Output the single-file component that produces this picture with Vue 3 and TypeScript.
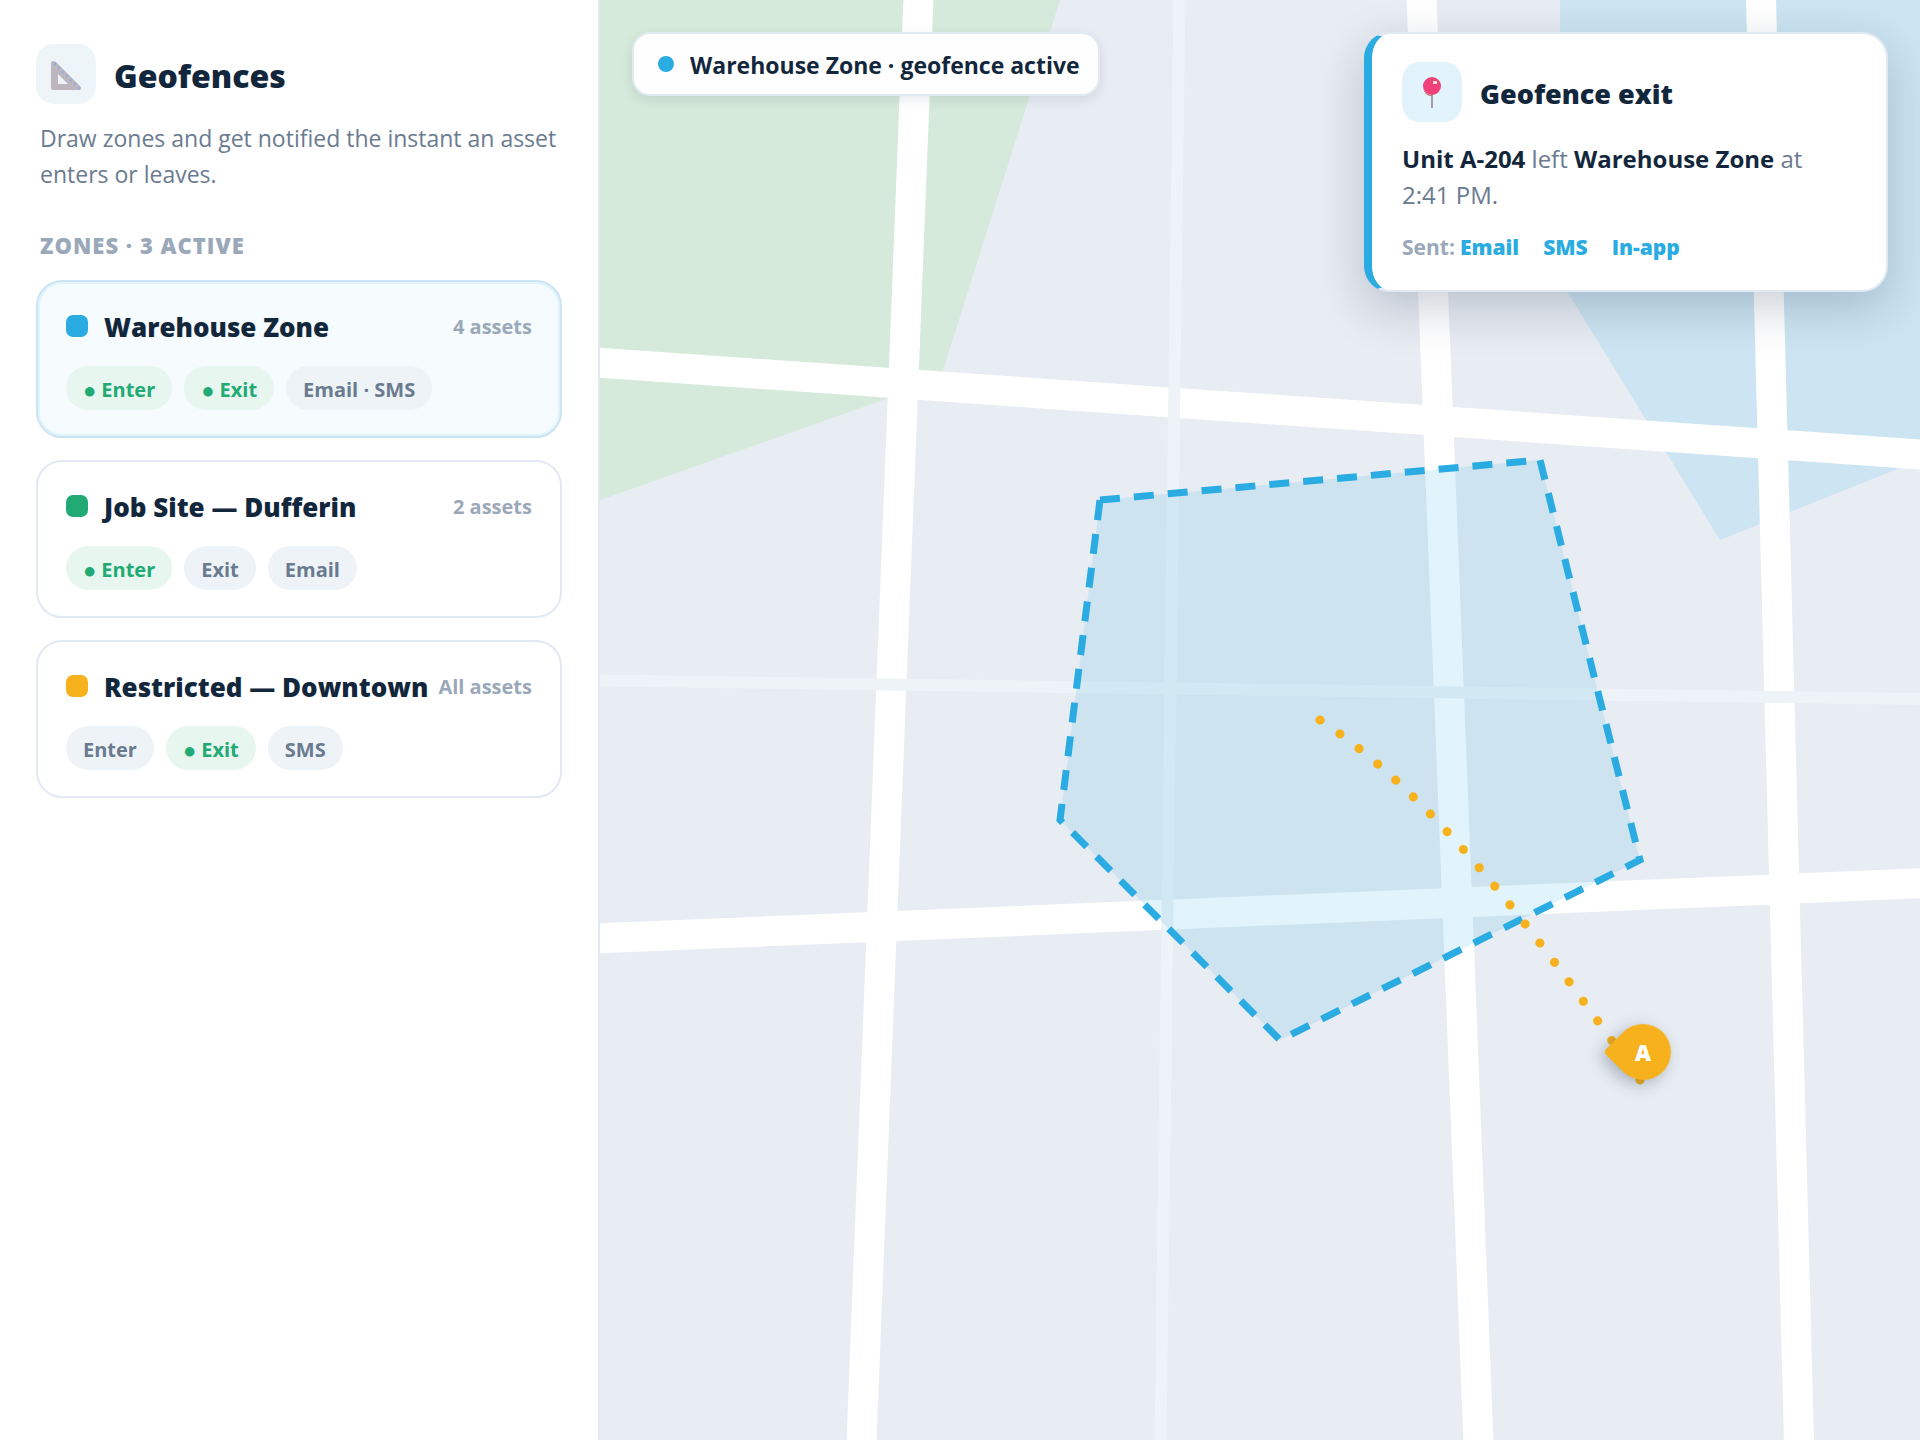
<script setup lang="ts">
import { ref } from 'vue'

interface Rule {
  label: string
  on: boolean
}

interface Zone {
  name: string
  assets: string
  color: string
  rules: Rule[]
}

const zones: Zone[] = [
  {
    name: 'Warehouse Zone',
    assets: '4 assets',
    color: '#2aabe2',
    rules: [
      { label: 'Enter', on: true },
      { label: 'Exit', on: true },
      { label: 'Email · SMS', on: false },
    ],
  },
  {
    name: 'Job Site — Dufferin',
    assets: '2 assets',
    color: '#22aa74',
    rules: [
      { label: 'Enter', on: true },
      { label: 'Exit', on: false },
      { label: 'Email', on: false },
    ],
  },
  {
    name: 'Restricted — Downtown',
    assets: 'All assets',
    color: '#f6b11d',
    rules: [
      { label: 'Enter', on: false },
      { label: 'Exit', on: true },
      { label: 'SMS', on: false },
    ],
  },
]

const selected = ref('Warehouse Zone')
const channels = ['Email', 'SMS', 'In-app']
</script>

<template>
  <div class="app">
    <aside class="sidebar">
      <header class="head">
        <span class="tile tile-head">
          <svg viewBox="0 0 60 60" width="60" height="60" aria-hidden="true">
            <path
              fill="#bdb6be"
              fill-rule="evenodd"
              d="M15 19q0-2 2-2 2 0 3 1L44 42q1 1 1 3 0 1-2 1H17q-2 0-2-2zM22 30v10h10z"
            />
            <path
              stroke="#8eb0de"
              stroke-width="2"
              fill="none"
              d="M20 19l-2 2M24 23l-2 2M28 27l-2 2M32 31l-2 2M36 35l-2 2M40 39l-2 2M44 43l-2 2"
            />
          </svg>
        </span>
        <h1>Geofences</h1>
      </header>
      <p class="intro">Draw zones and get notified the instant an asset enters or leaves.</p>
      <h2>ZONES · 3 ACTIVE</h2>
      <ul class="zones">
        <li
          v-for="zone in zones"
          :key="zone.name"
          class="zone"
          :class="{ active: zone.name === selected }"
          @click="selected = zone.name"
        >
          <div class="zone-row">
            <span class="swatch" :style="{ background: zone.color }"></span>
            <h3>{{ zone.name }}</h3>
            <span class="assets">{{ zone.assets }}</span>
          </div>
          <div class="chips">
            <span v-for="rule in zone.rules" :key="rule.label" class="chip" :class="{ on: rule.on }">
              <span v-if="rule.on" class="bullet">●</span>{{ rule.label }}
            </span>
          </div>
        </li>
      </ul>
    </aside>

    <main class="map">
      <svg class="canvas" viewBox="0 0 1320 1440" preserveAspectRatio="xMinYMin slice">
        <path fill="#d5eada" d="M0 0H460L340 380L0 500z" />
        <path fill="#cde5f2" d="M960 0H1320V460L1120 540L960 280z" />
        <g stroke="#fff" stroke-width="30">
          <path d="M-40 360L1400 460" />
          <path d="M-40 940L1400 880" />
          <path d="M320 -40L260 1480" />
          <path d="M820 -40L880 1480" />
          <path d="M1160 -40L1200 1480" />
        </g>
        <g stroke="#eef3f7" stroke-width="12">
          <path d="M-40 680L1400 700" />
          <path d="M580 -40L560 1480" />
        </g>
        <path
          class="fence"
          d="M500 500L940 460L1040 860L680 1040L460 820z"
        />
        <path class="trail" stroke-dasharray="0.2 24" d="M720 720C840 800 940 940 1040 1080" />
        <g transform="translate(1043 1052)">
          <path
            class="pin"
            transform="rotate(45)"
            d="M0 -28A28 28 0 0 1 0 28H-24Q-28 28 -28 24V0A28 28 0 0 1 0 -28z"
          />
          <text class="pin-label" text-anchor="middle" y="9">A</text>
        </g>
      </svg>

      <div class="overlay">
        <div class="status">
          <span class="status-dot"></span>
          <span class="status-text">Warehouse Zone · geofence active</span>
        </div>

        <section class="alert">
          <header class="alert-head">
            <span class="tile tile-alert">
              <svg viewBox="0 0 60 60" width="60" height="60" aria-hidden="true">
                <path stroke="#a39da5" stroke-width="2" d="M30 32V46" />
                <circle cx="30" cy="24" r="9" fill="#f0417a" />
                <path fill="#b5604a" d="M21 25q1 7 8 8l1 1q-8 0-9-9z" />
                <path fill="#fbe3cf" d="M31 19h4v3h-4z" />
              </svg>
            </span>
            <h2 class="alert-title">Geofence exit</h2>
          </header>
          <p class="alert-text">
            <strong>Unit A-204</strong> left <strong>Warehouse Zone</strong> at 2:41 PM.
          </p>
          <p class="sent">
            <span>Sent:</span>
            <b v-for="channel in channels" :key="channel">{{ channel }}</b>
          </p>
        </section>
      </div>
    </main>
  </div>
</template>

<style>
body {
  margin: 0;
}
</style>

<style scoped>
.app {
  display: grid;
  grid-template-columns: 600px 1fr;
  min-height: 100vh;
  font-family: 'Open Sans', 'Noto Sans', sans-serif;
  color: #13273c;
  background: #fff;
}

h1,
h2,
h3,
p,
ul {
  margin: 0;
  padding: 0;
}

.sidebar {
  box-sizing: border-box;
  padding: 44px 36px;
  border-right: 2px solid #e3e9f2;
}

.head,
.alert-head {
  display: flex;
  align-items: center;
  gap: 18px;
}

.tile {
  flex: none;
  width: 60px;
  height: 60px;
  border-radius: 18px;
}

.tile svg {
  display: block;
}

.tile-head {
  background: #edf5f9;
}

.tile-alert {
  background: #e2f3fb;
}

h1 {
  padding-top: 4px;
  font-size: 32px;
  line-height: 40px;
  font-weight: 800;
}

.intro {
  margin: 16px 4px 0;
  font-size: 23px;
  line-height: 36px;
  color: #6a7b90;
}

.sidebar h2 {
  margin: 38px 4px 0;
  font-size: 22px;
  line-height: 30px;
  font-weight: 800;
  letter-spacing: 1px;
  color: #9aa8b9;
}

.zones {
  display: flex;
  flex-direction: column;
  gap: 22px;
  margin-top: 20px;
  list-style: none;
}

.zone {
  padding: 28px 28px 26px;
  border: 2px solid #e3e9f2;
  border-radius: 26px;
  cursor: pointer;
}

.zone.active {
  border-color: #cbe4f3;
  background: #f6fbfe;
  box-shadow: inset 0 0 0 2px #e1f3fb;
}

.zone-row {
  display: flex;
  align-items: center;
  height: 32px;
}

.swatch {
  flex: none;
  width: 22px;
  height: 22px;
  margin-right: 16px;
  border-radius: 7px;
}

h3 {
  padding-top: 2px;
  font-size: 26px;
  line-height: 32px;
  font-weight: 800;
  white-space: nowrap;
}

.assets {
  margin-left: auto;
  padding-top: 2px;
  font-size: 20px;
  line-height: 32px;
  font-weight: 700;
  color: #9aa8b9;
  white-space: nowrap;
}

.chips {
  display: flex;
  gap: 12px;
  margin-top: 24px;
}

.chip {
  display: inline-flex;
  align-items: center;
  gap: 5px;
  box-sizing: border-box;
  height: 44px;
  padding: 2px 17px 0;
  border-radius: 22px;
  background: #eef3f8;
  color: #6a7b90;
  font-size: 20px;
  font-weight: 700;
}

.chip.on {
  background: #e7f6ef;
  color: #22aa74;
}

.bullet {
  font-size: 22px;
  line-height: 24px;
}

.map {
  position: relative;
  overflow: hidden;
  background: #e8ecf3;
}

.canvas {
  position: absolute;
  inset: 0;
  width: 100%;
  height: 100%;
}

.fence {
  fill: rgba(42, 180, 226, 0.14);
  stroke: #2aabe2;
  stroke-width: 7;
  stroke-dasharray: 20 14;
}

.trail {
  fill: none;
  stroke: #f6b11d;
  stroke-width: 9;
  stroke-linecap: round;
}

.pin {
  fill: #f6b11d;
  filter: drop-shadow(0 6px 8px rgba(16, 42, 67, 0.3));
}

.pin-label {
  fill: #fff;
  font-size: 22px;
  font-weight: 800;
}

.overlay {
  position: relative;
  display: flex;
  justify-content: space-between;
  align-items: flex-start;
  padding: 32px;
}

.status {
  display: flex;
  align-items: center;
  gap: 16px;
  box-sizing: border-box;
  height: 64px;
  padding: 0 18px 0 24px;
  border: 2px solid #e3e9f2;
  border-radius: 18px;
  background: #fefefe;
  box-shadow: 0 4px 12px rgba(16, 42, 67, 0.1);
  font-size: 23px;
  font-weight: 700;
  white-space: nowrap;
}

.status-dot {
  width: 16px;
  height: 16px;
  border-radius: 50%;
  background: #2aabe2;
}

.status-text {
  padding-top: 2px;
}

.alert {
  box-sizing: border-box;
  width: 524px;
  padding: 28px 30px;
  border: 2px solid #e3e9f2;
  border-left: 8px solid #2aabe2;
  border-radius: 26px;
  background: #fff;
  box-shadow: 0 16px 48px rgba(16, 42, 67, 0.22);
}

.alert-title {
  padding-top: 4px;
  font-size: 27px;
  line-height: 36px;
  font-weight: 800;
}

.alert-text {
  margin-top: 19px;
  font-size: 24px;
  line-height: 36px;
  color: #6a7b90;
}

.alert-text strong {
  font-weight: 700;
  color: #13273c;
}

.sent {
  display: flex;
  margin-top: 19px;
  font-size: 21px;
  line-height: 30px;
  font-weight: 700;
  color: #9aa8b9;
}

.sent span {
  margin-right: 5px;
}

.sent b {
  margin-right: 24px;
  font-weight: 800;
  color: #2aabe2;
}
</style>
